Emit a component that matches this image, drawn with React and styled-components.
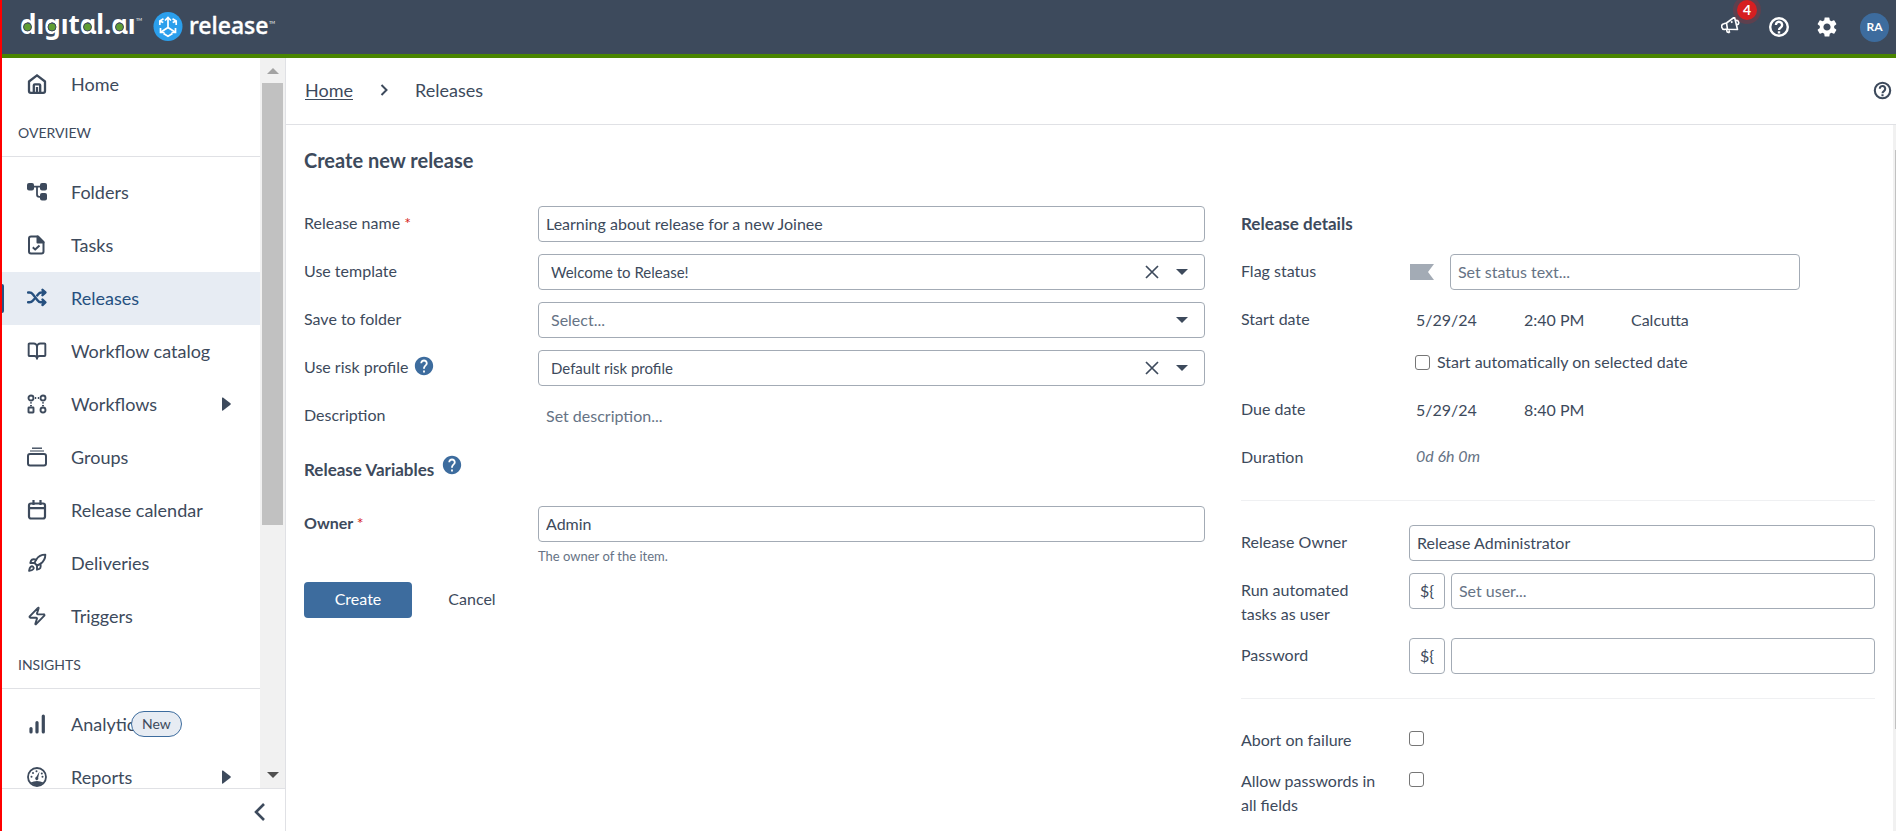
import styled, { createGlobalStyle } from "styled-components";
import { LuBookOpen, LuRocket, LuZap } from "react-icons/lu";
import { MdHelp, MdSettings } from "react-icons/md";

const overviewItems = [
  { label: "Folders", icon: FoldersIcon },
  { label: "Tasks", icon: TasksIcon },
  { label: "Releases", icon: ReleasesIcon, active: true },
  { label: "Workflow catalog", icon: LuBookOpen },
  { label: "Workflows", icon: WorkflowsIcon, expandable: true },
  { label: "Groups", icon: GroupsIcon },
  { label: "Release calendar", icon: CalendarIcon },
  { label: "Deliveries", icon: LuRocket },
  { label: "Triggers", icon: LuZap },
];

const insightItems = [
  { label: "Analytics", icon: AnalyticsIcon, badge: "New" },
  { label: "Reports", icon: ReportsIcon, expandable: true },
];

export default function App() {
  return (
    <>
      <GlobalStyle />
      <Shell>
        <Header />
        <Body>
          <Sidebar />
          <Main>
            <Breadcrumbs>
              <a href="#home">Home</a>
              <ChevronIcon />
              <span>Releases</span>
              <HelpButton type="button" aria-label="Help">
                <HelpIcon size={21} />
              </HelpButton>
            </Breadcrumbs>
            <Scroller>
              <Content>
                <Title>Create new release</Title>
                <Columns>
                  <ReleaseForm />
                  <ReleaseDetails />
                </Columns>
              </Content>
              <PageScrollbar>
                <div />
              </PageScrollbar>
            </Scroller>
          </Main>
        </Body>
      </Shell>
    </>
  );
}

function Header() {
  return (
    <TopBar>
      <Logo href="#home" aria-label="digital.ai release">
        <LogoDrawing />
      </Logo>
      <TopActions>
        <IconButton type="button" aria-label="Announcements">
          <MegaphoneIcon />
          <Count>4</Count>
        </IconButton>
        <IconButton type="button" aria-label="Help">
          <HelpIcon size={24} />
        </IconButton>
        <IconButton type="button" aria-label="Settings">
          <MdSettings size={24} />
        </IconButton>
      </TopActions>
      <Avatar type="button">RA</Avatar>
    </TopBar>
  );
}

function Sidebar() {
  return (
    <Aside>
      <NavArea>
        <Nav>
          <NavItem label="Home" icon={HomeIcon} />
          <SectionTitle>OVERVIEW</SectionTitle>
          {overviewItems.map((item) => (
            <NavItem key={item.label} {...item} />
          ))}
          <SectionTitle>INSIGHTS</SectionTitle>
          {insightItems.map((item) => (
            <NavItem key={item.label} {...item} />
          ))}
        </Nav>
        <NavScrollbar>
          <Arrow viewBox="0 0 12 6" $color="#a3a3a3">
            <path d="M0 6 6 0l6 6z" />
          </Arrow>
          <div className="track">
            <div className="thumb" />
          </div>
          <Arrow viewBox="0 0 12 6" $color="#505050">
            <path d="M0 0h12L6 6z" />
          </Arrow>
        </NavScrollbar>
      </NavArea>
      <AsideFooter>
        <button type="button" aria-label="Collapse">
          <svg width="12" height="18" viewBox="0 0 12 18">
            <path d="M10 1 2 9l8 8" fill="none" stroke="#3d4a5c" strokeWidth="2.6" />
          </svg>
        </button>
      </AsideFooter>
    </Aside>
  );
}

function NavItem({ label, icon: Icon, active, expandable, badge }) {
  return (
    <NavLink href={"#" + label} $active={active}>
      <Icon size={20} strokeWidth={2.3} />
      <span>{label}</span>
      {badge && <NewBadge>{badge}</NewBadge>}
      {expandable && (
        <Expand viewBox="0 0 9 14">
          <path d="M0 1q0-1 1-.4l7.4 5.7q.8.7 0 1.4L1 13.400q-1 .6-1-.4z" />
        </Expand>
      )}
    </NavLink>
  );
}

function ReleaseForm() {
  return (
    <Fields $label={234}>
      <Row>
        <label htmlFor="name">
          Release name <Star>*</Star>
        </label>
        <Input id="name" defaultValue="Learning about release for a new Joinee" />
      </Row>
      <Row>
        <label htmlFor="template">Use template</label>
        <Dropdown id="template" value="Welcome to Release!" clearable />
      </Row>
      <Row>
        <label htmlFor="folder">Save to folder</label>
        <Dropdown id="folder" value="Select..." />
      </Row>
      <Row>
        <label htmlFor="risk">
          Use risk profile <Hint size={22} />
        </label>
        <Dropdown id="risk" value="Default risk profile" clearable />
      </Row>
      <Row>
        <label htmlFor="description">Description</label>
        <Input id="description" placeholder="Set description..." $plain />
      </Row>
      <GroupTitle>
        <span>Release Variables</span>
        <Hint size={22} />
      </GroupTitle>
      <Row $bold>
        <label htmlFor="owner">
          Owner <Star>*</Star>
        </label>
        <div>
          <Input id="owner" defaultValue="Admin" />
          <Helper>The owner of the item.</Helper>
        </div>
      </Row>
      <Buttons>
        <button type="submit" className="primary">
          Create
        </button>
        <button type="button">Cancel</button>
      </Buttons>
    </Fields>
  );
}

function Dropdown({ id, value, clearable }) {
  return (
    <SelectBox $empty={!clearable}>
      <select id={id} defaultValue={value}>
        <option>{value}</option>
      </select>
      {clearable && (
        <button type="button" aria-label="Clear">
          <svg width="14" height="14" viewBox="0 0 14 14">
            <path d="m1 1 12 12M13 1 1 13" stroke="#3d4a5c" strokeWidth="1.7" />
          </svg>
        </button>
      )}
      <svg width="12" height="6" viewBox="0 0 12 6">
        <path d="M0 0h12L6 6z" fill="#3d4a5c" />
      </svg>
    </SelectBox>
  );
}

function ReleaseDetails() {
  return (
    <Fields as="section" $label={168}>
      <DetailsTitle>Release details</DetailsTitle>
      <Row>
        <label htmlFor="flag">Flag status</label>
        <FlagField>
          <svg width="24" height="16" viewBox="0 0 24 16">
            <path d="M0 0h24l-6 8 6 8H0z" fill="#a3abb5" />
          </svg>
          <Input id="flag" placeholder="Set status text..." />
        </FlagField>
      </Row>
      <Row>
        <label htmlFor="start">Start date</label>
        <DateField>
          <Input id="start" defaultValue="5/29/24" $plain />
          <Input aria-label="Start time" defaultValue="2:40 PM" $plain />
          <span>Calcutta</span>
        </DateField>
      </Row>
      <AutoStart>
        <Checkbox id="auto" />
        <label htmlFor="auto">Start automatically on selected date</label>
      </AutoStart>
      <Row>
        <label htmlFor="due">Due date</label>
        <DateField>
          <Input id="due" defaultValue="5/29/24" $plain />
          <Input aria-label="Due time" defaultValue="8:40 PM" $plain />
        </DateField>
      </Row>
      <Row>
        <label htmlFor="duration">Duration</label>
        <Duration id="duration">0d 6h 0m</Duration>
      </Row>
      <Divider />
      <Row>
        <label htmlFor="releaseOwner">Release Owner</label>
        <Input id="releaseOwner" defaultValue="Release Administrator" />
      </Row>
      <Row>
        <label htmlFor="user">Run automated tasks as user</label>
        <VariableField>
          <button type="button">{"${"}</button>
          <Input id="user" placeholder="Set user..." />
        </VariableField>
      </Row>
      <Row>
        <label htmlFor="password">Password</label>
        <VariableField>
          <button type="button">{"${"}</button>
          <Input id="password" type="password" />
        </VariableField>
      </Row>
      <Divider />
      <Row $short>
        <label htmlFor="abort">Abort on failure</label>
        <Checkbox id="abort" />
      </Row>
      <Row $short>
        <label htmlFor="allow">Allow passwords in all fields</label>
        <Checkbox id="allow" />
      </Row>
    </Fields>
  );
}

/* icons */

function LogoDrawing() {
  return (
    <svg width="260" height="54" viewBox="0 0 260 54" fill="#fff">
      <text x="0" y="34" fontFamily="Noto Sans, sans-serif" fontWeight="700" fontSize="26">
        dıgıtɑl.ɑı
      </text>
      <g fill="#5f9d33" stroke="#3d4a5c">
        <circle cx="7.500" cy="27" r="4" />
        <circle cx="32" cy="27" r="4" />
        <circle cx="67.500" cy="27" r="4" />
        <circle cx="99.500" cy="27" r="4" />
      </g>
      <circle cx="148" cy="26.500" r="14.500" fill="#2b9fec" />
      <g fill="none" stroke="#fff" strokeWidth="1.700">
        <path d="M148 27.500V18M148 27.500l-7 4.500M148 27.500l7 4.500" />
        <path d="M145 20.500l3-3 3 3M140.500 28v4.500h4M155.500 28v4.500h-4" />
        <path d="M143.500 18.800 139.800 21v4M139.800 21l3.500 1.500M152.500 18.800l3.700 2.200v4M156.200 21l-3.500 1.500M143.500 33.500l4.500 2.800 4.500-2.800" />
      </g>
      <text x="169" y="34" fontFamily="Noto Sans, sans-serif" fontWeight="500" fontSize="23" stroke="#fff" strokeWidth=".4">
        release
      </text>
      <g fontFamily="Lato, sans-serif" fontSize="4">
        <text x="116" y="21">TM</text>
        <text x="249" y="24">TM</text>
      </g>
    </svg>
  );
}

function HelpIcon({ size }) {
  return (
    <svg width={size} height={size} viewBox="0 0 24 24" fill="none" stroke="currentColor" strokeWidth="2.400">
      <circle cx="12" cy="12" r="8.800" />
      <path d="M8.900 10a3.100 3.100 0 1 1 5 2.400c-1.200.9-1.900 1.300-1.900 2.600M12 16.200v2.400" />
    </svg>
  );
}

function MegaphoneIcon() {
  return (
    <svg width="20" height="20" viewBox="1 2 20 20" fill="none" stroke="#fff" strokeWidth="1.600" strokeLinejoin="round">
      <path d="M6.500 8 14.500 2l3 12.500-10-.2M6.500 8l1 6.300M6.500 8l-2.700.8a2.800 2.800 0 0 0 1.400 5.500h2.300M9 14.500l.5 3.300M6.500 14.500l.7 2.500 2.300.8M16 5.500a2.200 2.200 0 0 1 1 4.300M11 7.500l1.500-1" />
    </svg>
  );
}

function ChevronIcon() {
  return (
    <svg width="8" height="12" viewBox="0 0 8 12">
      <path d="m1.500 1 5 5-5 5" fill="none" stroke="#3d4a5c" strokeWidth="2" />
    </svg>
  );
}

function HomeIcon() {
  return (
    <svg width="20" height="20" viewBox="0 0 20 20" fill="none" stroke="currentColor" strokeWidth="2.300" strokeLinejoin="round">
      <path d="M2 7.500 10 1.300l8 6.200V17q0 1.800-1.800 1.800H3.800Q2 18.800 2 17z" />
      <path d="M6.800 18.500V11.300q0-1 1-1h4.400q1 0 1 1v7.200M10 13v6" />
    </svg>
  );
}

function FoldersIcon() {
  return (
    <svg width="20" height="20" viewBox="0 0 20 20" fill="currentColor">
      <rect x="0" y="1" width="7" height="7.500" rx="2" />
      <rect x="13" y="1" width="7" height="7.500" rx="2" />
      <rect x="13" y="11" width="7" height="7.500" rx="2" />
      <path d="M6 4.700h8M10 4.700v7.800q0 2.300 2.300 2.300H14" fill="none" stroke="currentColor" strokeWidth="1.800" />
    </svg>
  );
}

function TasksIcon() {
  return (
    <svg width="20" height="20" viewBox="0 0 20 20" fill="none" stroke="currentColor" strokeWidth="2" strokeLinejoin="round">
      <path d="M11 1.500H4q-2 0-2 2v13q0 2 2 2h10.500q2 0 2-2V7z" />
      <path d="M10.500 1.500 16.500 7.500h-6z" fill="currentColor" />
      <path d="m5.800 12.300 2.400 2.300 4.300-4" />
    </svg>
  );
}

function ReleasesIcon() {
  return (
    <svg width="20" height="20" viewBox="0 0 20 20" fill="none" stroke="currentColor" strokeWidth="2.400" strokeLinecap="round" strokeLinejoin="round">
      <path d="M1 4.500h1.500q2 0 3.500 1.900l4.500 5.800q1.500 2.100 3.500 2.100h4M1 14.300h1.500q2 0 3.500-1.900l1-1.200M10.200 7.400 11 6.400q1.500-1.900 3.500-1.900H18M15.500 1.800l2.900 2.700-2.900 2.700M15.500 11.600l2.900 2.700-2.900 2.700" />
    </svg>
  );
}

function WorkflowsIcon() {
  return (
    <svg width="20" height="20" viewBox="0 0 20 20" fill="none" stroke="currentColor" strokeWidth="1.900">
      <circle cx="4" cy="4" r="2.500" />
      <circle cx="16" cy="4" r="2.500" />
      <circle cx="16" cy="16" r="2.500" />
      <rect x="1.500" y="13.500" width="5" height="5" rx=".5" />
      <path d="M8 4h1.200M10.800 4H12M4 8.200v1.300M4 11v1.200M16 8.200v1.300M16 11v1.200" />
    </svg>
  );
}

function GroupsIcon() {
  return (
    <svg width="20" height="20" viewBox="0 0 20 20" fill="none" stroke="currentColor">
      <rect x="1" y="7" width="18" height="11.500" rx="2" strokeWidth="2" />
      <path d="M3 4h14" strokeWidth="1.500" opacity=".7" />
      <path d="M5 1.200h10" strokeWidth="1.400" />
    </svg>
  );
}

function CalendarIcon() {
  return (
    <svg width="20" height="20" viewBox="0 0 20 20" fill="none" stroke="currentColor" strokeWidth="2.200">
      <rect x="2" y="3.500" width="16" height="15" rx="2" />
      <path d="M2 8.200h16M6.500 0v5M13.500 0v5" />
    </svg>
  );
}

function AnalyticsIcon() {
  return (
    <svg width="20" height="20" viewBox="0 0 20 20" stroke="currentColor" strokeWidth="3.200" strokeLinecap="round">
      <path d="M4 14.500v3.500M10 8.500V18M16.300 2v16" />
    </svg>
  );
}

function ReportsIcon() {
  return (
    <svg width="20" height="20" viewBox="0 0 20 20" fill="currentColor">
      <circle cx="10" cy="10" r="9" fill="none" stroke="currentColor" strokeWidth="1.800" />
      <path d="M3.500 15.500q6.500-3 13 0-6.500 6.500-13 0z" />
      <path d="m12.500 4.500-1.300 6.300a1.600 1.600 0 1 1-2-.8z" />
      <circle cx="4.500" cy="9.800" r="1" />
      <circle cx="6" cy="6" r="1" />
      <circle cx="9.500" cy="4.200" r="1" />
      <circle cx="15.500" cy="9.800" r="1" />
      <circle cx="14.800" cy="6.500" r="1" />
    </svg>
  );
}

/* styles */

const GlobalStyle = createGlobalStyle`
  * {
    box-sizing: border-box;
  }
  body {
    margin: 0;
    font-family: Lato, "Liberation Sans", sans-serif;
    font-size: 16px;
    line-height: 24px;
    color: #3d4a5c;
    background: #fff;
  }
  button, input, select {
    font: inherit;
    color: inherit;
  }
  button {
    padding: 0;
    border: none;
    background: none;
    cursor: pointer;
  }
  h1, h2, p {
    margin: 0;
  }
`;

const Shell = styled.div`
  display: flex;
  flex-direction: column;
  height: 100vh;
  border-left: 2px solid #f00;
`;

const TopBar = styled.header`
  display: flex;
  flex-shrink: 0;
  align-items: center;
  height: 58px;
  padding: 0 7px 0 18px;
  background: #3d4a5c;
  border-bottom: 4px solid #498500;
`;

const Logo = styled.a`
  display: flex;
  margin-right: auto;
`;

const TopActions = styled.div`
  display: flex;
  gap: 24px;
  margin-right: 21px;
`;

const IconButton = styled.button`
  display: flex;
  align-items: center;
  justify-content: center;
  width: 24px;
  height: 24px;
  color: #fff;
  position: relative;
`;

const Count = styled.span`
  position: absolute;
  top: -15px;
  left: 18px;
  width: 20px;
  height: 20px;
  border-radius: 50%;
  background: #d61f21;
  box-shadow: 0 0 0 4px rgba(214, 31, 33, 0.22);
  font-size: 14px;
  font-weight: bold;
  line-height: 20px;
`;

const Avatar = styled.button`
  width: 29px;
  height: 29px;
  border-radius: 50%;
  background: #3d6c9e;
  color: #fff;
  font-size: 12px;
  font-weight: bold;
`;

const Body = styled.div`
  display: flex;
  flex: 1;
  min-height: 0;
`;

const Aside = styled.aside`
  display: flex;
  flex-direction: column;
  flex-shrink: 0;
  width: 284px;
  border-right: 1px solid #e0e1e5;
`;

const NavArea = styled.div`
  display: flex;
  flex: 1;
  min-height: 0;
`;

const Nav = styled.nav`
  flex: 1;
  overflow: hidden;
`;

const NavLink = styled.a`
  display: flex;
  align-items: center;
  height: 53px;
  padding: 0 29px 2px 25px;
  color: ${(p) => (p.$active ? "#26507f" : "#3d4a5c")};
  background: ${(p) => (p.$active ? "#e7ecf3" : "none")};
  font-size: 18px;
  text-decoration: none;
  position: relative;

  > svg:first-child {
    flex-shrink: 0;
    margin-right: 24px;
  }

  &::before {
    content: "";
    display: ${(p) => (p.$active ? "block" : "none")};
    position: absolute;
    left: 0;
    top: 12px;
    width: 2px;
    height: 29px;
    background: #26507f;
    border-radius: 0 2px 2px 0;
  }
`;

const NewBadge = styled.span`
  position: absolute;
  left: 129px;
  height: 26px;
  padding: 0 10px;
  border: 1px solid #3d6c9e;
  border-radius: 13px;
  background: #e7ecf3;
  color: #3d4a5c;
  font-size: 14px;
  line-height: 24px;
`;

const Expand = styled.svg`
  width: 9px;
  height: 14px;
  margin-left: auto;
  fill: #3d4a5c;
`;

const SectionTitle = styled.h2`
  height: 46px;
  margin-bottom: 9px;
  padding: 10px 16px 0;
  border-bottom: 1px solid #e0e1e5;
  font-size: 14px;
  font-weight: normal;
`;

const NavScrollbar = styled.div`
  display: flex;
  flex-direction: column;
  align-items: center;
  width: 25px;
  padding: 10px 2px;
  background: #f1f1f1;

  .track {
    flex: 1;
    width: 21px;
    margin: 9px 0;
  }
  .thumb {
    height: 65%;
    background: #c1c1c1;
  }
`;

const Arrow = styled.svg`
  width: 12px;
  height: 6px;
  fill: ${(p) => p.$color};
`;

const AsideFooter = styled.div`
  display: flex;
  align-items: center;
  justify-content: flex-end;
  height: 43px;
  padding: 10px 19px 0;
  border-top: 1px solid #e0e1e5;
`;

const Main = styled.main`
  display: flex;
  flex-direction: column;
  flex: 1;
  min-width: 0;
`;

const Breadcrumbs = styled.div`
  display: flex;
  flex-shrink: 0;
  align-items: center;
  gap: 27px;
  height: 67px;
  padding: 0 3px 2px 19px;
  border-bottom: 1px solid #e0e1e5;
  font-size: 18px;

  a {
    color: inherit;
    text-underline-offset: 2px;
  }
`;

const HelpButton = styled.button`
  display: flex;
  margin-left: auto;
`;

const Scroller = styled.div`
  display: flex;
  flex: 1;
  min-height: 0;
  overflow: hidden;
`;

const Content = styled.div`
  flex: 1;
  padding: 21px 18px 0;
`;

const PageScrollbar = styled.div`
  flex-shrink: 0;
  width: 3px;
  padding: 25px 0 0 2px;
  background: #f1f1f1;

  div {
    height: 85%;
    background: #c1c1c1;
  }
`;

const Title = styled.h1`
  margin-bottom: 32px;
  font-size: 20px;
  line-height: 28px;
`;

const Columns = styled.div`
  display: grid;
  grid-template-columns: minmax(0, 27fr) minmax(0, 19fr);
  gap: 36px;
  align-items: start;
`;

const Fields = styled.form`
  --label: ${(p) => p.$label}px;
  display: flex;
  flex-direction: column;
  gap: 12px;
`;

const Row = styled.div`
  display: grid;
  grid-template-columns: var(--label) minmax(0, 1fr);
  align-items: start;
  min-height: ${(p) => (p.$short ? 0 : 36)}px;

  > label {
    padding: 5px 32px 0 0;
    font-weight: ${(p) => (p.$bold ? "bold" : "normal")};
  }
`;

const Input = styled.input`
  display: block;
  width: 100%;
  height: 36px;
  padding: 0 7px 2px;
  border: 1px solid ${(p) => (p.$plain ? "transparent" : "#a3abb5")};
  border-radius: 4px;
  background: #fff;

  &::placeholder {
    color: #667385;
    opacity: 1;
  }
`;

const Star = styled.span`
  color: #d61f21;
  font-weight: normal;
`;

const Hint = styled(MdHelp)`
  color: #3d6c9e;
  vertical-align: -4px;
`;

const SelectBox = styled.div`
  display: flex;
  align-items: center;
  height: 36px;
  padding-right: 16px;
  border: 1px solid #a3abb5;
  border-radius: 4px;

  select {
    flex: 1;
    height: 34px;
    padding: 0 12px;
    border: none;
    background: none;
    appearance: none;
    color: ${(p) => (p.$empty ? "#667385" : "inherit")};
    font-size: ${(p) => (p.$empty ? 16 : 15)}px;
  }
  button {
    display: flex;
    margin-right: 17px;
  }
`;

const GroupTitle = styled.h2`
  display: flex;
  align-items: flex-start;
  gap: 7px;
  padding: 8px 0 12px;
  font-size: 17px;
  line-height: 24px;

  span {
    padding-top: 4px;
  }
`;

const Helper = styled.p`
  padding-top: 4px;
  color: #667385;
  font-size: 13px;
  line-height: 20px;
`;

const Buttons = styled.div`
  display: flex;
  gap: 6px;
  padding-top: 4px;

  button {
    min-width: 108px;
    height: 36px;
    padding-bottom: 2px;
    border-radius: 4px;
  }
  .primary {
    background: #3d6c9e;
    color: #fff;
  }
`;

const DetailsTitle = styled.h2`
  padding: 6px 0;
  font-size: 17px;
  line-height: 24px;
`;

const FlagField = styled.div`
  display: flex;
  align-items: center;
  gap: 16px;
  padding-left: 1px;

  svg {
    flex-shrink: 0;
  }
  input {
    width: 350px;
  }
`;

const DateField = styled.div`
  display: flex;
  align-items: center;

  input {
    width: 108px;
    padding: 0 6px 2px;
  }
  span {
    padding-left: 6px;
  }
`;

const AutoStart = styled.div`
  display: flex;
  align-items: center;
  gap: 7px;
  padding: 0 0 6px calc(var(--label) + 6px);

  input {
    margin: 0;
  }
`;

const Checkbox = styled.input.attrs({ type: "checkbox" })`
  appearance: none;
  width: 15px;
  height: 15px;
  margin: 8px 0 0;
  border: 1px solid #767676;
  border-radius: 3px;
  background: #fff;
`;

const Duration = styled.output`
  padding: 4px 7px;
  color: #667385;
  font-style: italic;
`;

const Divider = styled.hr`
  width: 100%;
  margin: 12px 0;
  border: none;
  border-top: 1px solid #eff0f2;
`;

const VariableField = styled.div`
  display: flex;
  gap: 6px;

  button {
    flex-shrink: 0;
    width: 36px;
    height: 36px;
    border: 1px solid #a3abb5;
    border-radius: 4px;
  }
`;
